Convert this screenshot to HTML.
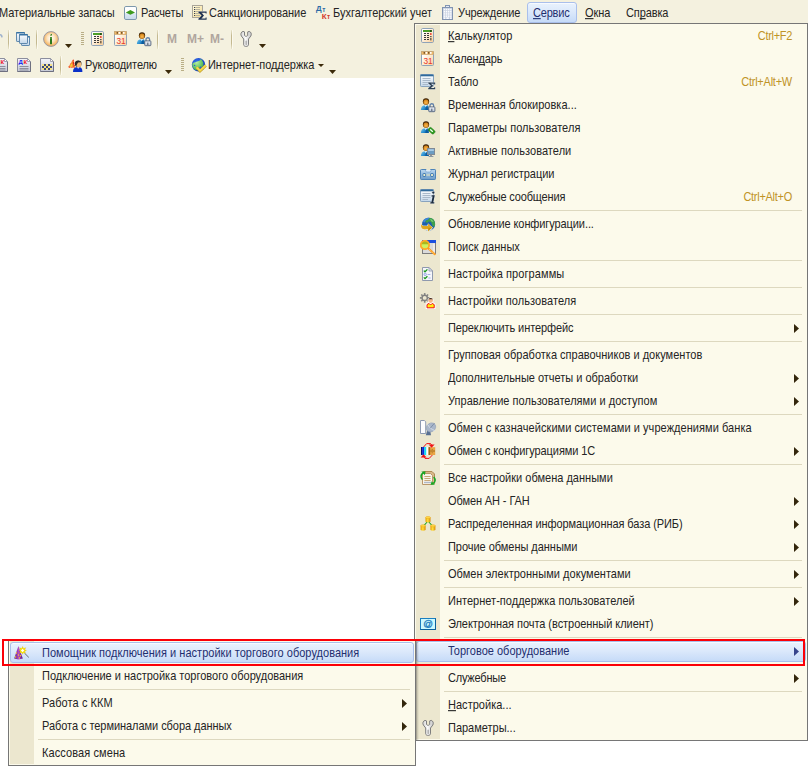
<!DOCTYPE html>
<html><head><meta charset="utf-8"><title>1C</title>
<style>
html,body{margin:0;padding:0}
body{width:808px;height:766px;overflow:hidden;background:#fff;position:relative;font-family:"Liberation Sans",sans-serif;font-size:11px;color:#000;}
.a{position:absolute}
.t{position:absolute;white-space:nowrap;line-height:13px;height:13px;transform:scaleY(1.1);transform-origin:0 10px;color:#242424}
.bar{position:absolute;left:0;top:0;width:808px;height:78px;background:#f4f1df}
.vs{position:absolute;width:1px;background:linear-gradient(#e9e4cc,#c4b990 30%,#c4b990 70%,#e9e4cc);box-shadow:1px 0 0 #fbf9ee}
.grip{position:absolute;width:3px;height:13px;background:repeating-linear-gradient(#b9ae86 0 1px,transparent 1px 2px)}
.dd{position:absolute;width:7px;height:4px;background:#3b2a0a;clip-path:polygon(0 0,100% 0,50% 100%)}
.menu{position:absolute;background:#fcfaeb;border:1px solid #767676;box-sizing:border-box}
.sub{}
.strip{position:absolute;left:1px;top:1px;bottom:1px;width:24px;background:#ece7cf}
.sep{position:absolute;height:1px;background:#ddd8bf}
.hl{position:absolute;box-sizing:border-box;border:1px solid #a9bfec;border-radius:3px;background:linear-gradient(#e9f2fd,#dce9fb 45%,#c6dbf8);box-shadow:inset 0 1px 0 #f7faff}
.sc{color:#c09326}
.ar{position:absolute;width:5px;height:9px;background:#33260c;clip-path:polygon(0 0,100% 50%,0 100%)}
u{text-decoration:underline;text-underline-offset:1px;text-decoration-skip-ink:none;text-decoration-thickness:1px}
svg{position:absolute;overflow:visible}
.dis{font-weight:bold;font-size:12px;color:#b0a69e}
</style></head><body>

<svg width="0" height="0" style="position:absolute"><defs>
<linearGradient id="gPeach" x1="0" y1="0" x2="1" y2="1"><stop offset="0.2" stop-color="#ffffff"/><stop offset="1" stop-color="#fbcf95"/></linearGradient>
<linearGradient id="gWin" x1="0" y1="0" x2="0" y2="1"><stop offset="0" stop-color="#ffffff"/><stop offset="1" stop-color="#c3d7ea"/></linearGradient>
<linearGradient id="gBody" x1="0" y1="0" x2="1" y2="0.6"><stop offset="0" stop-color="#7cc8ee"/><stop offset="0.55" stop-color="#2f93d2"/><stop offset="1" stop-color="#0a5fa5"/></linearGradient>
<radialGradient id="gHead" cx="0.5" cy="0.6" r="0.6"><stop offset="0" stop-color="#f8b850"/><stop offset="0.7" stop-color="#d88a20"/><stop offset="1" stop-color="#8a5208"/></radialGradient>
<radialGradient id="gInfo" cx="0.5" cy="0.45" r="0.55"><stop offset="0" stop-color="#ffffff"/><stop offset="0.45" stop-color="#fde6c4"/><stop offset="1" stop-color="#f2a94a"/></radialGradient>
<linearGradient id="gLock" x1="0" y1="0" x2="0" y2="1"><stop offset="0" stop-color="#f4f7fc"/><stop offset="1" stop-color="#b8c4d6"/></linearGradient>
<linearGradient id="gCas" x1="0" y1="0" x2="0" y2="1"><stop offset="0" stop-color="#bcd8f0"/><stop offset="1" stop-color="#6a9bc9"/></linearGradient>
<linearGradient id="gDoc" x1="0" y1="0" x2="0" y2="1"><stop offset="0" stop-color="#f4f5fa"/><stop offset="1" stop-color="#c4c8d6"/></linearGradient>
<linearGradient id="gWr" x1="0" y1="0" x2="1" y2="0"><stop offset="0" stop-color="#d4d4d4"/><stop offset="0.45" stop-color="#fafafa"/><stop offset="1" stop-color="#c4c4c4"/></linearGradient>
<radialGradient id="gGlobe" cx="0.4" cy="0.35" r="0.7"><stop offset="0" stop-color="#3b7bf0"/><stop offset="1" stop-color="#0a2fb8"/></radialGradient>
<radialGradient id="gLand" cx="0.4" cy="0.3" r="0.7"><stop offset="0" stop-color="#b8f0a0"/><stop offset="1" stop-color="#3fae4a"/></radialGradient>
<linearGradient id="gHat" x1="0" y1="0" x2="1" y2="0"><stop offset="0" stop-color="#5a1a86"/><stop offset="0.5" stop-color="#b24ac4"/><stop offset="1" stop-color="#5a1a86"/></linearGradient>
<linearGradient id="gCyl" x1="0" y1="0" x2="1" y2="0"><stop offset="0" stop-color="#e89a00"/><stop offset="0.45" stop-color="#ffe040"/><stop offset="1" stop-color="#d88800"/></linearGradient>
<linearGradient id="gSanc" x1="0" y1="0" x2="1" y2="1"><stop offset="0" stop-color="#fffbe0"/><stop offset="1" stop-color="#f6dc90"/></linearGradient>
<linearGradient id="gRas" x1="0" y1="0" x2="0" y2="1"><stop offset="0.45" stop-color="#ffffff"/><stop offset="0.55" stop-color="#dbe8f3"/><stop offset="1" stop-color="#c6d9ea"/></linearGradient>
</defs></svg>
<div class="bar"></div>
<div class="t " style="left:-1px;top:7px;letter-spacing:-0.054px;">Материальные запасы</div>
<svg class="i-raschety" style="left:123px;top:5px" width="16" height="16" viewBox="0 0 16 16"><rect x="1.5" y="1.5" width="12" height="13" rx="1.4" fill="url(#gRas)" stroke="#7d98ac"/><path d="M2.8 7.4L7.4 5L12 7.4L7.4 9.8Z" fill="#3d9a1e"/></svg>
<div class="t " style="left:141px;top:7px;letter-spacing:-0.087px;">Расчеты</div>
<svg class="i-sanction" style="left:192px;top:5px" width="16" height="16" viewBox="0 0 16 16"><rect x="0.5" y="0.5" width="10" height="12" fill="url(#gSanc)" stroke="#aaa69a"/><rect x="2" y="2" width="1.2" height="1" fill="#3a4250"/><rect x="3.4" y="2" width="4.6" height="1" fill="#b8b4a0"/><rect x="2" y="4" width="1.2" height="1" fill="#3a4250"/><rect x="3.4" y="4" width="4.6" height="1" fill="#b8b4a0"/><rect x="2" y="6" width="1.2" height="1" fill="#3a4250"/><rect x="3.4" y="6" width="4.6" height="1" fill="#b8b4a0"/><rect x="2" y="8" width="1.2" height="1" fill="#3a4250"/><rect x="3.4" y="8" width="4.6" height="1" fill="#b8b4a0"/><rect x="2" y="10" width="1.2" height="1" fill="#3a4250"/><rect x="3.4" y="10" width="4.6" height="1" fill="#b8b4a0"/><path d="M6.4 6.4H14.6V8.6H13.6V7.8H9.4L12 10.6L9.4 13.4H13.6V12.6H14.6V14.8H6.4V13.8L9.6 10.6L6.4 7.4Z" fill="#1f3150" stroke="#f8f5e6" stroke-width=".8" paint-order="stroke"/></svg>
<div class="t " style="left:209px;top:7px;letter-spacing:-0.067px;">Санкционирование</div>
<svg class="i-dtkt" style="left:316px;top:5px" width="16" height="16" viewBox="0 0 16 16"><text x="0" y="6.3" font-family="Liberation Sans,sans-serif" font-weight="bold" font-size="7.8" fill="#2c6aa6">Д</text><text x="6.3" y="7" font-family="Liberation Sans,sans-serif" font-weight="bold" font-size="6.4" fill="#2c6aa6">т</text><text x="5.8" y="13.8" font-family="Liberation Sans,sans-serif" font-weight="bold" font-size="8" fill="#d23a2a">К</text><text x="10.9" y="14" font-family="Liberation Sans,sans-serif" font-weight="bold" font-size="6.4" fill="#d23a2a">т</text></svg>
<div class="t " style="left:333px;top:7px;letter-spacing:-0.007px;">Бухгалтерский учет</div>
<svg class="i-building" style="left:441px;top:5px" width="16" height="16" viewBox="0 0 16 16"><rect x="4.5" y="0.5" width="4" height="2.4" fill="#e6ebf4" stroke="#8194b2"/><rect x="1.5" y="2.5" width="10" height="12" fill="#c9d2e2" stroke="#8194b2"/><rect x="2.8" y="3.8" width="1.4" height="1.5" fill="#fbfcff"/><rect x="2.8" y="6" width="1.4" height="1.5" fill="#fbfcff"/><rect x="2.8" y="8.2" width="1.4" height="1.5" fill="#fbfcff"/><rect x="2.8" y="10.4" width="1.4" height="1.5" fill="#fbfcff"/><rect x="4.9" y="3.8" width="1.4" height="1.5" fill="#fbfcff"/><rect x="4.9" y="6" width="1.4" height="1.5" fill="#fbfcff"/><rect x="4.9" y="8.2" width="1.4" height="1.5" fill="#fbfcff"/><rect x="4.9" y="10.4" width="1.4" height="1.5" fill="#fbfcff"/><rect x="7" y="3.8" width="1.4" height="1.5" fill="#fbfcff"/><rect x="7" y="6" width="1.4" height="1.5" fill="#fbfcff"/><rect x="7" y="8.2" width="1.4" height="1.5" fill="#fbfcff"/><rect x="7" y="10.4" width="1.4" height="1.5" fill="#fbfcff"/><rect x="9.1" y="3.8" width="1.4" height="1.5" fill="#fbfcff"/><rect x="9.1" y="6" width="1.4" height="1.5" fill="#fbfcff"/><rect x="9.1" y="8.2" width="1.4" height="1.5" fill="#fbfcff"/><rect x="9.1" y="10.4" width="1.4" height="1.5" fill="#fbfcff"/><rect x="2.8" y="12.4" width="1.4" height="1.6" fill="#fbfcff"/><rect x="5.4" y="12.4" width="2.4" height="1.6" fill="#fbfcff"/><rect x="9.1" y="12.4" width="1.4" height="1.6" fill="#fbfcff"/></svg>
<div class="t " style="left:458px;top:7px;letter-spacing:-0.076px;">Учреждение</div>
<div class="hl" style="left:527px;top:2px;width:50px;height:21px"></div>
<div class="t " style="left:533px;top:7px;letter-spacing:-0.195px;color:#1f2f6f"><u>С</u>ервис</div>
<div class="t " style="left:585px;top:7px;letter-spacing:-0.066px;"><u>О</u>кна</div>
<div class="t " style="left:626px;top:7px;letter-spacing:-0.122px;">Сп<u>р</u>авка</div>
<svg class="i-undo" style="left:-14px;top:31px" width="16" height="16" viewBox="0 0 16 16"><path d="M12 7C12.6 3 15.6 2.6 16 6.4" fill="none" stroke="#9fb2cc" stroke-width="1.6"/></svg>
<div class="vs" style="left:8px;top:30px;height:19px"></div>
<svg class="i-windows" style="left:15px;top:31px" width="16" height="16" viewBox="0 0 16 16"><rect x="1.5" y="1.5" width="8" height="9" rx=".6" fill="url(#gWin)" stroke="#5f88ac"/><rect x="1.2" y="1.1" width="8.6" height="1.5" rx=".4" fill="#3873a3"/><rect x="6.5" y="5.5" width="8" height="9" rx=".6" fill="url(#gWin)" stroke="#5f88ac"/><rect x="6.2" y="5.1" width="8.6" height="1.5" rx=".4" fill="#3873a3"/><rect x="4.5" y="3.5" width="8" height="9" rx=".6" fill="url(#gWin)" stroke="#5f88ac"/><rect x="4.2" y="3.1" width="8.6" height="1.5" rx=".4" fill="#3873a3"/></svg>
<div class="vs" style="left:36px;top:30px;height:19px"></div>
<svg class="i-info" style="left:43px;top:31px" width="16" height="16" viewBox="0 0 16 16"><circle cx="8" cy="8" r="7.4" fill="url(#gInfo)" stroke="#9a9aa6" stroke-width="1"/><path d="M7 4L9 2.8V4.6H7Z" fill="#2d7f1c"/><rect x="7" y="6" width="2" height="7.2" fill="#2a7a1a"/><rect x="7" y="6" width="2" height="2" fill="#6aaa50" opacity=".5"/></svg>
<div class="dd" style="left:65px;top:44px"></div>
<div class="grip" style="left:81px;top:32px"></div>
<svg class="i-calc" style="left:90px;top:31px" width="16" height="16" viewBox="0 0 16 16"><rect x="1.5" y="0.5" width="12" height="14" rx="1.2" fill="url(#gPeach)" stroke="#8ea2b8"/><rect x="3" y="2" width="9" height="2" fill="#4a9e28"/><rect x="10" y="2" width="1.6" height="2" fill="#27521a"/><rect x="4" y="5" width="2" height="1" fill="#3a3a3a"/><rect x="7" y="5" width="2" height="1" fill="#3a3a3a"/><rect x="4" y="7" width="2" height="1" fill="#3a3a3a"/><rect x="7" y="7" width="2" height="1" fill="#3a3a3a"/><rect x="4" y="9" width="2" height="1" fill="#3a3a3a"/><rect x="7" y="9" width="2" height="1" fill="#3a3a3a"/><rect x="4" y="11" width="2" height="1" fill="#3a3a3a"/><rect x="7" y="11" width="2" height="1" fill="#3a3a3a"/><rect x="10.2" y="5" width="1.3" height="2" fill="#e83020"/><rect x="10.2" y="8" width="1.3" height="1.2" fill="#3a3a3a"/><rect x="10.2" y="10" width="1.3" height="2.4" fill="#5a4a3a"/></svg>
<svg class="i-calendar" style="left:113px;top:31px" width="16" height="16" viewBox="0 0 16 16"><rect x="1.5" y="0.5" width="12" height="14" rx="1" fill="url(#gPeach)" stroke="#8ea2b8"/><rect x="1.5" y="0.5" width="12" height="3" fill="#f0b866" stroke="#c9a26a" stroke-width=".6"/><rect x="3.6" y="1.2" width="1.4" height="1.4" fill="#5a3a1a"/><rect x="5.6" y="1" width="1.6" height="1.8" fill="#fff"/><rect x="8" y="1.2" width="1.4" height="1.4" fill="#5a3a1a"/><rect x="10" y="1" width="1.6" height="1.8" fill="#fff"/><text x="3.4" y="13.1" font-family="Liberation Sans,sans-serif" font-size="9.6" fill="#e8392b" textLength="9.2" lengthAdjust="spacingAndGlyphs">31</text></svg>
<svg class="i-userlock" style="left:136px;top:31px" width="16" height="16" viewBox="0 0 16 16"><path d="M0.9 13 C0.9 9.8 2.4 8.7 4.6 8.3 L7.4 8.3 C8.6 8.7 8.9 9.6 8.9 13 Z" fill="url(#gBody)"/><path d="M4.3 8.2 L5.8 9.9 L7.3 8.2 Z" fill="#f4fbff"/><path d="M5.8 9.9 L6.8 9.2 L7.7 10.4 L7.7 13 L5.4 13 Z" fill="#0a5a9c" opacity=".9"/><circle cx="6" cy="4.5" r="3.15" fill="#3a2006"/><ellipse cx="6" cy="5" rx="2.7" ry="2.8" fill="url(#gHead)"/><path d="M10 10V8.4C10 6.2 13.6 6.2 13.6 8.4V10" fill="#f6f0d8" stroke="#5f7fa8" stroke-width="1.3"/><rect x="8.7" y="9.9" width="6.2" height="4.8" rx=".8" fill="url(#gLock)" stroke="#52627a" stroke-width=".9"/><rect x="11.4" y="11.6" width=".9" height="2.4" fill="#3a4658"/></svg>
<div class="vs" style="left:157px;top:30px;height:19px"></div>
<div class="t dis" style="left:167px;top:33px;">M</div>
<div class="t dis" style="left:187px;top:33px;">M+</div>
<div class="t dis" style="left:210px;top:33px;">M-</div>
<div class="vs" style="left:231px;top:30px;height:19px"></div>
<svg class="i-wrench" style="left:238px;top:31px" width="16" height="16" viewBox="0 0 16 16"><path d="M5 0.4C3 0.9 2.3 3.3 3.4 5.1L5.7 8V13.8C5.7 15.9 10.5 15.9 10.5 13.8V8L12.8 5.1C13.9 3.3 13.2 0.9 11.2 0.4L9.7 0.9V4C9.7 5 8.9 5.3 8.1 5.3C7.3 5.3 6.5 5 6.5 4V0.9Z" fill="url(#gWr)" stroke="#7e7e7e" stroke-width="1" stroke-linejoin="round"/><rect x="7.6" y="9.4" width="1" height="4.6" rx=".5" fill="#8a8a8a"/></svg>
<div class="dd" style="left:259px;top:44px"></div>
<svg class="i-docdk" style="left:-7px;top:57px" width="16" height="16" viewBox="0 0 16 16"><path d="M1.5 1.5H11.5L14.5 4.5V14.5H1.5Z" fill="url(#gDoc)" stroke="#8c8e9e"/><path d="M1.5 14.5H14.5V5" fill="none" stroke="#6e7080"/><path d="M11.5 1.5V4.5H14.5Z" fill="#fff" stroke="#8c8e9e" stroke-width=".8"/><text x="2.6" y="7.2" font-family="Liberation Sans,sans-serif" font-weight="bold" font-size="6" fill="#0a1ef0">Д</text><text x="7.4" y="7.2" font-family="Liberation Sans,sans-serif" font-weight="bold" font-size="6" fill="#f01020">К</text><path d="M3.5 9.5H12.5M3.5 11.5H12.5M3.5 13H12.5" stroke="#8e909c" stroke-width="1"/></svg>
<svg class="i-docdk" style="left:16px;top:57px" width="16" height="16" viewBox="0 0 16 16"><path d="M1.5 1.5H11.5L14.5 4.5V14.5H1.5Z" fill="url(#gDoc)" stroke="#8c8e9e"/><path d="M1.5 14.5H14.5V5" fill="none" stroke="#6e7080"/><path d="M11.5 1.5V4.5H14.5Z" fill="#fff" stroke="#8c8e9e" stroke-width=".8"/><text x="2.6" y="7.2" font-family="Liberation Sans,sans-serif" font-weight="bold" font-size="6" fill="#0a1ef0">Д</text><text x="7.4" y="7.2" font-family="Liberation Sans,sans-serif" font-weight="bold" font-size="6" fill="#f01020">К</text><path d="M3.5 9.5H12.5M3.5 11.5H12.5M3.5 13H12.5" stroke="#8e909c" stroke-width="1"/></svg>
<svg class="i-doccheck" style="left:39px;top:57px" width="16" height="16" viewBox="0 0 16 16"><path d="M1.5 1.5H11.5L14.5 4.5V14.5H1.5Z" fill="url(#gDoc)" stroke="#8c8e9e"/><path d="M1.5 14.5H14.5V5" fill="none" stroke="#6e7080"/><path d="M11.5 1.5V4.5H14.5Z" fill="#fff" stroke="#8c8e9e" stroke-width=".8"/><rect x="3" y="7" width="10" height="6" fill="#f6e284"/><rect x="5" y="7" width="2" height="2" fill="#3b4a7c"/><rect x="9" y="7" width="2" height="2" fill="#3b4a7c"/><rect x="3" y="9" width="2" height="2" fill="#3b4a7c"/><rect x="7" y="9" width="2" height="2" fill="#3b4a7c"/><rect x="11" y="9" width="2" height="2" fill="#3b4a7c"/><rect x="5" y="11" width="2" height="2" fill="#3b4a7c"/><rect x="9" y="11" width="2" height="2" fill="#3b4a7c"/></svg>
<div class="vs" style="left:60px;top:56px;height:19px"></div>
<svg class="i-warnuser" style="left:67px;top:57px" width="16" height="16" viewBox="0 0 16 16"><path d="M6.3 2.8L1.6 10.3H7.8Z" fill="#f8c838" stroke="#f03a20" stroke-width="1" stroke-linejoin="round" stroke-dasharray="1.2 .6"/><rect x="5.6" y="4.8" width="1.3" height="3" fill="#e01818"/><rect x="5.6" y="8.4" width="1.3" height="1.2" fill="#e01818"/><path d="M6 15C6 12 7 10.7 9 10.2H13C14.6 10.7 15.4 12 15.4 15Z" fill="#0a30c8"/><path d="M10 10.2L11.2 11.8L12.4 10.2Z" fill="#f2f6ff"/><circle cx="11.2" cy="6.8" r="3.3" fill="#20201e"/><ellipse cx="11.8" cy="7.4" rx="2.5" ry="2.8" fill="#f0b878"/><path d="M8.2 6A3.2 3.2 0 0 1 14 5.2L11 5.6L9.4 8.4Z" fill="#2a2a2a"/></svg>
<div class="t " style="left:85px;top:59px;letter-spacing:-0.116px;">Руководителю</div>
<div class="dd" style="left:165px;top:70px"></div>
<div class="grip" style="left:181px;top:58px"></div>
<svg class="i-globe" style="left:191px;top:57px" width="16" height="16" viewBox="0 0 16 16"><circle cx="7.5" cy="7.8" r="6.7" fill="url(#gGlobe)"/><path d="M1.2 7C2 5.6 4 5.4 5.4 4.8L8.4 3.8L10 1.9L11 3.2L12.2 5.4L12.4 8.4L10.4 10.6L7.4 10.8L6 13.4L3.4 12.6L1.6 10Z" fill="url(#gLand)"/><circle cx="3.6" cy="8.4" r=".7" fill="#2a5fd8"/><circle cx="9.6" cy="10.4" r=".8" fill="#2a5fd8"/><path d="M5.6 10.4L9 14L14.8 8.6" fill="none" stroke="#c39a1c" stroke-width="2.8" stroke-linejoin="miter"/><path d="M5.6 10.2L9 13.7L14.8 8.3" fill="none" stroke="#f4d84c" stroke-width="2" stroke-linejoin="miter"/></svg>
<div class="t " style="left:208px;top:59px;letter-spacing:-0.045px;">Интернет-поддержка</div>
<div class="a" style="left:318px;top:64px;width:0;height:0;border-left:3px solid transparent;border-right:3px solid transparent;border-top:3px solid #3b2a0a"></div>
<div class="dd" style="left:329px;top:70px"></div>
<div class="menu" style="left:414px;top:23px;width:394px;height:718px"><div class="strip"></div></div>
<svg class="i-calc" style="left:420px;top:28px" width="16" height="16" viewBox="0 0 16 16"><rect x="1.5" y="0.5" width="12" height="14" rx="1.2" fill="url(#gPeach)" stroke="#8ea2b8"/><rect x="3" y="2" width="9" height="2" fill="#4a9e28"/><rect x="10" y="2" width="1.6" height="2" fill="#27521a"/><rect x="4" y="5" width="2" height="1" fill="#3a3a3a"/><rect x="7" y="5" width="2" height="1" fill="#3a3a3a"/><rect x="4" y="7" width="2" height="1" fill="#3a3a3a"/><rect x="7" y="7" width="2" height="1" fill="#3a3a3a"/><rect x="4" y="9" width="2" height="1" fill="#3a3a3a"/><rect x="7" y="9" width="2" height="1" fill="#3a3a3a"/><rect x="4" y="11" width="2" height="1" fill="#3a3a3a"/><rect x="7" y="11" width="2" height="1" fill="#3a3a3a"/><rect x="10.2" y="5" width="1.3" height="2" fill="#e83020"/><rect x="10.2" y="8" width="1.3" height="1.2" fill="#3a3a3a"/><rect x="10.2" y="10" width="1.3" height="2.4" fill="#5a4a3a"/></svg>
<div class="t " style="left:448px;top:30px;letter-spacing:-0.010px;"><u>К</u>алькулятор</div>
<div class="t sc" style="left:0px;top:30px;letter-spacing:-0.311px;left:auto;right:16px">Ctrl+F2</div>
<svg class="i-calendar" style="left:420px;top:51px" width="16" height="16" viewBox="0 0 16 16"><rect x="1.5" y="0.5" width="12" height="14" rx="1" fill="url(#gPeach)" stroke="#8ea2b8"/><rect x="1.5" y="0.5" width="12" height="3" fill="#f0b866" stroke="#c9a26a" stroke-width=".6"/><rect x="3.6" y="1.2" width="1.4" height="1.4" fill="#5a3a1a"/><rect x="5.6" y="1" width="1.6" height="1.8" fill="#fff"/><rect x="8" y="1.2" width="1.4" height="1.4" fill="#5a3a1a"/><rect x="10" y="1" width="1.6" height="1.8" fill="#fff"/><text x="3.4" y="13.1" font-family="Liberation Sans,sans-serif" font-size="9.6" fill="#e8392b" textLength="9.2" lengthAdjust="spacingAndGlyphs">31</text></svg>
<div class="t " style="left:448px;top:53px;letter-spacing:-0.137px;">Кален<u>д</u>арь</div>
<svg class="i-tablo" style="left:420px;top:74px" width="16" height="16" viewBox="0 0 16 16"><rect x="0.5" y="0.5" width="13" height="12" rx=".8" fill="url(#gWin)" stroke="#88a3be"/><rect x="0.5" y="0.5" width="13" height="1.8" fill="#2f6a9b"/><path d="M2.5 4.5H10.5M2.5 6.5H10.5M2.5 8.5H10.5M2.5 10.5H8" stroke="#a9b9ca" stroke-width="1"/><path d="M8 8h8v7h-8z" fill="#eef3f9" opacity=".0"/><path d="M8.2 8.4H15.2V10.4H14.2V9.7H10.9L13.3 11.8L10.9 13.9H14.2V13.2H15.2V15.2H8.2V14.3L11 11.8L8.2 9.3Z" fill="#2c4054" stroke="#f2f5f9" stroke-width=".5" paint-order="stroke"/></svg>
<div class="t " style="left:448px;top:76px;letter-spacing:-0.102px;">Табло</div>
<div class="t sc" style="left:0px;top:76px;letter-spacing:-0.239px;left:auto;right:16px">Ctrl+Alt+W</div>
<svg class="i-userlock" style="left:420px;top:97px" width="16" height="16" viewBox="0 0 16 16"><path d="M0.9 13 C0.9 9.8 2.4 8.7 4.6 8.3 L7.4 8.3 C8.6 8.7 8.9 9.6 8.9 13 Z" fill="url(#gBody)"/><path d="M4.3 8.2 L5.8 9.9 L7.3 8.2 Z" fill="#f4fbff"/><path d="M5.8 9.9 L6.8 9.2 L7.7 10.4 L7.7 13 L5.4 13 Z" fill="#0a5a9c" opacity=".9"/><circle cx="6" cy="4.5" r="3.15" fill="#3a2006"/><ellipse cx="6" cy="5" rx="2.7" ry="2.8" fill="url(#gHead)"/><path d="M10 10V8.4C10 6.2 13.6 6.2 13.6 8.4V10" fill="#f6f0d8" stroke="#5f7fa8" stroke-width="1.3"/><rect x="8.7" y="9.9" width="6.2" height="4.8" rx=".8" fill="url(#gLock)" stroke="#52627a" stroke-width=".9"/><rect x="11.4" y="11.6" width=".9" height="2.4" fill="#3a4658"/></svg>
<div class="t " style="left:448px;top:99px;letter-spacing:0.018px;">Временная блокировка...</div>
<svg class="i-userparam" style="left:420px;top:120px" width="16" height="16" viewBox="0 0 16 16"><path d="M0.9 13 C0.9 9.8 2.4 8.7 4.6 8.3 L7.4 8.3 C8.6 8.7 8.9 9.6 8.9 13 Z" fill="url(#gBody)"/><path d="M4.3 8.2 L5.8 9.9 L7.3 8.2 Z" fill="#f4fbff"/><path d="M5.8 9.9 L6.8 9.2 L7.7 10.4 L7.7 13 L5.4 13 Z" fill="#0a5a9c" opacity=".9"/><circle cx="6" cy="4.5" r="3.15" fill="#3a2006"/><ellipse cx="6" cy="5" rx="2.7" ry="2.8" fill="url(#gHead)"/><g transform="rotate(42 11.5 10.6)"><rect x="8.2" y="8.7" width="7" height="3.8" rx="1.2" fill="#2f9e22" stroke="#1c7414" stroke-width=".6"/><rect x="9.6" y="9.9" width="3.8" height="1.3" rx=".6" fill="#f0fff0"/></g></svg>
<div class="t " style="left:448px;top:122px;letter-spacing:0.047px;">Параметры пользователя</div>
<svg class="i-useractive" style="left:420px;top:143px" width="16" height="16" viewBox="0 0 16 16"><path d="M0.9 13 C0.9 9.8 2.4 8.7 4.6 8.3 L7.4 8.3 C8.6 8.7 8.9 9.6 8.9 13 Z" fill="url(#gBody)"/><path d="M4.3 8.2 L5.8 9.9 L7.3 8.2 Z" fill="#f4fbff"/><path d="M5.8 9.9 L6.8 9.2 L7.7 10.4 L7.7 13 L5.4 13 Z" fill="#0a5a9c" opacity=".9"/><circle cx="6" cy="4.5" r="3.15" fill="#3a2006"/><ellipse cx="6" cy="5" rx="2.7" ry="2.8" fill="url(#gHead)"/><rect x="7.5" y="5.5" width="7" height="6" fill="#6c9cc2" stroke="#7f8a96" stroke-width="1"/><rect x="8.2" y="6.2" width="5.6" height="1.8" fill="#a8cbe6"/><rect x="10.2" y="12" width="1.6" height="1.2" fill="#77828e"/><rect x="8.6" y="13" width="4.8" height="1" fill="#8b96a2"/></svg>
<div class="t " style="left:448px;top:145px;letter-spacing:0.047px;">Активные пользователи</div>
<svg class="i-journal" style="left:420px;top:166px" width="16" height="16" viewBox="0 0 16 16"><g transform="translate(0 2)"><path d="M1.5 1.5H6L7 2.8H9.6L10.6 1.5H14.9Q15.5 1.5 15.5 2.2V10.6Q15.5 11.5 14.8 11.5H1.2Q0.5 11.5 0.5 10.6V2.2Q0.5 1.5 1.5 1.5Z" fill="url(#gCas)" stroke="#4d83b8"/><path d="M5.2 2L6.4 4H10.2L11.4 2" fill="#dcebf8" stroke="#6a9acb" stroke-width=".6"/><circle cx="4.3" cy="7" r="1.9" fill="#3f77ad"/><circle cx="12" cy="7" r="1.9" fill="#3f77ad"/><rect x="3.4" y="6.1" width="1.8" height="1.8" fill="#fffbd0"/><rect x="11.1" y="6.1" width="1.8" height="1.8" fill="#fffbd0"/><rect x="6.4" y="6.2" width="3.6" height="1.6" fill="#c8d4c8"/></g></svg>
<div class="t " style="left:448px;top:168px;letter-spacing:-0.031px;">Журнал регистрации</div>
<svg class="i-messages" style="left:420px;top:189px" width="16" height="16" viewBox="0 0 16 16"><rect x="0.5" y="0.5" width="13" height="12" rx=".8" fill="url(#gWin)" stroke="#88a3be"/><rect x="0.5" y="0.5" width="13" height="1.8" fill="#2f6a9b"/><path d="M2.5 4.5H10.5M2.5 6.5H10.5M2.5 8.5H10.5M2.5 10.5H8" stroke="#a9b9ca" stroke-width="1"/><circle cx="13.3" cy="3.6" r="1.4" fill="#1c2c40" stroke="#eef3f9" stroke-width=".5"/><path d="M11.6 6.2H14.8L13.2 13.2H14.4L14.2 14.4H10.2L10.4 13.2H11.4L12.6 7.4H11.4Z" fill="#1c2c40" stroke="#eef3f9" stroke-width=".5" paint-order="stroke"/></svg>
<div class="t " style="left:448px;top:191px;letter-spacing:-0.152px;">Служебные сообщения</div>
<div class="t sc" style="left:0px;top:191px;letter-spacing:-0.276px;left:auto;right:16px">Ctrl+Alt+O</div>
<div class="sep" style="left:444px;top:210px;width:358px"></div>
<svg class="i-update" style="left:420px;top:216px" width="16" height="16" viewBox="0 0 16 16"><circle cx="8.6" cy="8.2" r="6.5" fill="#1d5fae"/><path d="M4 3.6C5.4 2.2 7.4 1.7 9.4 1.8L8.4 3.6L6 4.6L5 6.4L3 6Z" fill="#3d86d8"/><path d="M9.4 1.8C11.4 1.8 13.2 2.8 14.2 4.6C15.2 6.4 15.4 8.6 14.6 10.6L12.8 10.4L11 6L8.6 5.6L7.4 7L5.2 5.8L6 4.6L8.4 3.6Z" fill="#3f9f4c"/><path d="M10 3C11.6 3.2 13 4.4 13.6 6L11.6 5.4Z" fill="#7ccf7a"/><path d="M3.6 12.2C5.2 14.4 8.6 15.2 11.4 14L12.6 11.4L7.6 9.4Z" fill="#eef8ff"/><path d="M1.2 7.6C1.4 9.4 2.4 10 4 10H8V7.8L12.6 11.6L8 15.4V13.2H4C1.6 13.2 0.6 11 1.2 7.6Z" fill="#e0a820" stroke="#fdf6e0" stroke-width=".7" paint-order="stroke"/><path d="M3 12H8.4V14.4L11.8 11.7Z" fill="#c08a10"/></svg>
<div class="t " style="left:448px;top:218px;letter-spacing:-0.095px;">Обновление конфигурации...</div>
<svg class="i-search" style="left:420px;top:239px" width="16" height="16" viewBox="0 0 16 16"><rect x="2.5" y="1.5" width="13" height="13" fill="#dadada" stroke="#7c7c7c"/><rect x="2" y="1" width="14" height="3" fill="#1a4fe0"/><rect x="13" y="4.5" width="2" height="9.5" fill="#ececec"/><circle cx="4.9" cy="6" r="4.2" fill="#cdf25e" stroke="#ffa928" stroke-width="1.4"/><path d="M1 4.4A4.2 4.2 0 0 1 8.8 4.4V5.2H1Z" fill="#a9b81c"/><circle cx="4.9" cy="6" r="4.2" fill="none" stroke="#ffa928" stroke-width="1.4"/><path d="M8.4 9.6L14.8 15.2" stroke="#ff9b18" stroke-width="2" stroke-linecap="round"/><path d="M9 10.2L14.6 15" stroke="#fff0b0" stroke-width=".8" stroke-dasharray="1 1"/></svg>
<div class="t " style="left:448px;top:241px;letter-spacing:0.022px;">Поиск данных</div>
<div class="sep" style="left:444px;top:260px;width:358px"></div>
<svg class="i-settings" style="left:420px;top:266px" width="16" height="16" viewBox="0 0 16 16"><g transform="translate(0 1)"><path d="M2.5 0.5H9L12.5 4V13.5H2.5Z" fill="#f5f6fa" stroke="#8f99ae"/><path d="M9 0.5V4H12.5Z" fill="#e6e9f1" stroke="#8f99ae" stroke-width=".8"/><path d="M3.8 3.6L5 4.8L7.4 2.4" fill="none" stroke="#18961c" stroke-width="1.3"/><path d="M3.8 10.4L5 11.6L7.4 9.2" fill="none" stroke="#18961c" stroke-width="1.3"/><circle cx="5.2" cy="7.4" r="1.2" fill="#dfe6ff" stroke="#8b9be0" stroke-width=".8"/><path d="M7.6 7.5H10.4M8.4 11H10.6" stroke="#9fb0e8" stroke-width="1"/></g></svg>
<div class="t " style="left:448px;top:268px;letter-spacing:0.085px;">Настройка программы</div>
<div class="sep" style="left:444px;top:287px;width:358px"></div>
<svg class="i-usersettings" style="left:420px;top:293px" width="16" height="16" viewBox="0 0 16 16"><g transform="translate(4.7 4.9)"><circle r="2.7" fill="none" stroke="#808080" stroke-width="1.5"/><rect x="-0.8" y="-4.8" width="1.6" height="1.8" fill="#808080" transform="rotate(0)"/><rect x="-0.8" y="-4.8" width="1.6" height="1.8" fill="#808080" transform="rotate(45)"/><rect x="-0.8" y="-4.8" width="1.6" height="1.8" fill="#808080" transform="rotate(90)"/><rect x="-0.8" y="-4.8" width="1.6" height="1.8" fill="#808080" transform="rotate(135)"/><rect x="-0.8" y="-4.8" width="1.6" height="1.8" fill="#808080" transform="rotate(180)"/><rect x="-0.8" y="-4.8" width="1.6" height="1.8" fill="#808080" transform="rotate(225)"/><rect x="-0.8" y="-4.8" width="1.6" height="1.8" fill="#808080" transform="rotate(270)"/><rect x="-0.8" y="-4.8" width="1.6" height="1.8" fill="#808080" transform="rotate(315)"/></g><path d="M6.4 15.4V11.2L8.6 9.8H12.4L14.8 11.2V15.4Z" fill="#fff" stroke="#fff" stroke-width="1.4"/><circle cx="10.6" cy="7.4" r="2.9" fill="#fff"/><path d="M7 14.8V11.6L9 10.4L10.6 12L12.2 10.4L14.2 11.6V14.8Z" fill="#ffee10" stroke="#f01010" stroke-width="1"/><circle cx="10.6" cy="7.6" r="2.3" fill="#f6b88c"/><path d="M8.2 7.4A2.4 2.4 0 0 1 13 7.4L12.4 6.2H8.8Z" fill="#3a2418"/></svg>
<div class="t " style="left:448px;top:295px;letter-spacing:0.075px;">Настройки пользователя</div>
<div class="sep" style="left:444px;top:314px;width:358px"></div>
<div class="t " style="left:448px;top:322px;letter-spacing:-0.101px;">Переключить интерфейс</div>
<div class="ar" style="left:794px;top:324px;"></div>
<div class="sep" style="left:444px;top:341px;width:358px"></div>
<div class="t " style="left:448px;top:349px;letter-spacing:0.014px;">Групповая обработка справочников и документов</div>
<div class="t " style="left:448px;top:372px;letter-spacing:-0.011px;">Дополнительные отчеты и обработки</div>
<div class="ar" style="left:794px;top:374px;"></div>
<div class="t " style="left:448px;top:395px;letter-spacing:0.031px;">Управление пользователями и доступом</div>
<div class="ar" style="left:794px;top:397px;"></div>
<div class="sep" style="left:444px;top:414px;width:358px"></div>
<svg class="i-treasury" style="left:420px;top:420px" width="16" height="16" viewBox="0 0 16 16"><path d="M0.5 0.5H4.4L5.7 1.8V13.5H0.5Z" fill="#fdfdff" stroke="#8d9ab2"/><path d="M8 8.4L9.8 8.4L11 15.2H5.8Z" fill="#586f92"/><ellipse cx="11" cy="7.4" rx="5" ry="4.2" transform="rotate(-38 11 7.4)" fill="#aab7ca" stroke="#8e9db4" stroke-width=".6"/><path d="M7.4 4.2C9 7 11.6 9.8 14.8 10.6" fill="none" stroke="#d7dfea" stroke-width="1"/><path d="M10.4 8L14.6 3" stroke="#7f90aa" stroke-width="1"/></svg>
<div class="t " style="left:448px;top:422px;letter-spacing:0.059px;">Обмен с казначейскими системами и учреждениями банка</div>
<svg class="i-exch1c" style="left:420px;top:443px" width="16" height="16" viewBox="0 0 16 16"><rect x="1" y="4" width="1.6" height="8" fill="#0c0c6c"/><rect x="2.4" y="4" width="2" height="8" fill="#0428e4"/><rect x="4.4" y="4" width="2" height="8" fill="#08e6f6"/><rect x="6.4" y="4" width="1.8" height="8" fill="#fdfdfd"/><rect x="8.6" y="4.2" width="6.6" height="7.8" fill="#eaa444"/><rect x="8.6" y="4.2" width="1.6" height="7.8" fill="#9a6418"/><path d="M10.4 8H15M12.2 6.2V7M12.2 9.4V10.2" stroke="#8a5a14" stroke-width=".8"/><path d="M3.6 4L6.6 0.6H10.6L11.6 2" fill="none" stroke="#f01418" stroke-width="1"/><path d="M8.6 1.4H14.6L11.6 4.8Z" fill="#f01418"/><path d="M12.4 12L9.2 15.4H5L4 14" fill="none" stroke="#f01418" stroke-width="1"/><path d="M0.6 14.6H6.6L3.6 11.2Z" fill="#f01418"/></svg>
<div class="t " style="left:448px;top:445px;letter-spacing:-0.078px;">Обмен с конфигурациями 1С</div>
<div class="ar" style="left:794px;top:447px;"></div>
<div class="sep" style="left:444px;top:464px;width:358px"></div>
<svg class="i-allexch" style="left:420px;top:470px" width="16" height="16" viewBox="0 0 16 16"><path d="M3.5 1.5H12L14.5 4V13.5H3.5Z" fill="#d9b98a" stroke="#b08a54"/><path d="M2.5 3.5H10.5L12.5 5.5V14.5H2.5Z" fill="#f8f4ea" stroke="#b9976a"/><path d="M4.4 6.5H10.6M4.4 8.5H10.6M4.4 10.5H10.6" stroke="#c8a878" stroke-width="1"/><path d="M4 12.5H11" stroke="#b0b8c8" stroke-width="1.4"/><path d="M2.4 9.6C0.6 7.2 1 4.4 3 2.8" fill="none" stroke="#14a824" stroke-width="1.5"/><path d="M1.4 1.6H5.6L4.8 5.2Z" fill="#14a824"/><path d="M13.8 7C15.6 9.4 15 12 13.4 13.4" fill="none" stroke="#14a824" stroke-width="1.5"/><path d="M14.8 14.8H10.6L11.6 11.2Z" fill="#14a824"/></svg>
<div class="t " style="left:448px;top:472px;letter-spacing:0.009px;">Все настройки обмена данными</div>
<div class="t " style="left:448px;top:495px;letter-spacing:-0.099px;">Обмен АН - ГАН</div>
<div class="ar" style="left:794px;top:497px;"></div>
<svg class="i-rib" style="left:420px;top:516px" width="16" height="16" viewBox="0 0 16 16"><path d="M8 5L3.2 10.4M8 5L12.8 10.4" stroke="#28a828" stroke-width="1.1"/><path d="M5.5 1.6V5.8Q8.0 7.3999999999999995 10.5 5.8V1.6Z" fill="url(#gCyl)"/><ellipse cx="8.0" cy="1.6" rx="2.5" ry="1.1" fill="#ffd84a" stroke="#e8a410" stroke-width=".5"/><path d="M0.6 9.8V14.0Q3.1 15.600000000000001 5.6 14.0V9.8Z" fill="url(#gCyl)"/><ellipse cx="3.1" cy="9.8" rx="2.5" ry="1.1" fill="#ffd84a" stroke="#e8a410" stroke-width=".5"/><path d="M10.4 9.8V14.0Q12.9 15.600000000000001 15.4 14.0V9.8Z" fill="url(#gCyl)"/><ellipse cx="12.9" cy="9.8" rx="2.5" ry="1.1" fill="#ffd84a" stroke="#e8a410" stroke-width=".5"/></svg>
<div class="t " style="left:448px;top:518px;letter-spacing:-0.075px;">Распределенная информационная база (РИБ)</div>
<div class="ar" style="left:794px;top:520px;"></div>
<div class="t " style="left:448px;top:541px;letter-spacing:-0.036px;">Прочие обмены данными</div>
<div class="ar" style="left:794px;top:543px;"></div>
<div class="sep" style="left:444px;top:560px;width:358px"></div>
<div class="t " style="left:448px;top:568px;letter-spacing:0.036px;">Обмен электронными документами</div>
<div class="ar" style="left:794px;top:570px;"></div>
<div class="sep" style="left:444px;top:587px;width:358px"></div>
<div class="t " style="left:448px;top:595px;letter-spacing:0.018px;">Интернет-поддержка пользователей</div>
<div class="ar" style="left:794px;top:597px;"></div>
<svg class="i-email" style="left:420px;top:616px" width="16" height="16" viewBox="0 0 16 16"><rect x="0.5" y="2.5" width="15" height="11" fill="#cdf9ff" stroke="#1b7fc0"/><path d="M0.5 13.5H15.5V2.5" fill="none" stroke="#0b629c"/><text x="8" y="11.2" font-family="Liberation Sans,sans-serif" font-size="9.5" fill="#1f7fc0" stroke="#1f7fc0" stroke-width=".35" text-anchor="middle">@</text></svg>
<div class="t " style="left:448px;top:618px;letter-spacing:-0.047px;">Электронная почта (встроенный клиент)</div>
<div class="sep" style="left:444px;top:637px;width:358px"></div>
<div class="hl" style="left:416px;top:641px;width:390px;height:21px"></div>
<div class="t " style="left:448px;top:645px;letter-spacing:0.001px;color:#1f2f6f">Торговое оборудование</div>
<div class="ar" style="left:794px;top:647px;background:#36448c"></div>
<div class="sep" style="left:444px;top:664px;width:358px"></div>
<div class="t " style="left:448px;top:672px;letter-spacing:-0.206px;">Служебные</div>
<div class="ar" style="left:794px;top:674px;"></div>
<div class="sep" style="left:444px;top:691px;width:358px"></div>
<div class="t " style="left:448px;top:699px;letter-spacing:0.023px;"><u>Н</u>астройка...</div>
<svg class="i-wrench" style="left:420px;top:720px" width="16" height="16" viewBox="0 0 16 16"><path d="M5 0.4C3 0.9 2.3 3.3 3.4 5.1L5.7 8V13.8C5.7 15.9 10.5 15.9 10.5 13.8V8L12.8 5.1C13.9 3.3 13.2 0.9 11.2 0.4L9.7 0.9V4C9.7 5 8.9 5.3 8.1 5.3C7.3 5.3 6.5 5 6.5 4V0.9Z" fill="url(#gWr)" stroke="#7e7e7e" stroke-width="1" stroke-linejoin="round"/><rect x="7.6" y="9.4" width="1" height="4.6" rx=".5" fill="#8a8a8a"/></svg>
<div class="t " style="left:448px;top:722px;letter-spacing:-0.009px;">Параметры...</div>
<div class="menu sub" style="left:8px;top:639px;width:408px;height:127px"><div class="strip"></div></div>
<div class="hl" style="left:10px;top:642px;width:404px;height:21px"></div>
<svg class="i-wizard" style="left:14px;top:644px" width="16" height="16" viewBox="0 0 16 16"><g transform="translate(0 1.4)"><path d="M4.4 0.6L0.2 13.2Q4.4 14.8 8.8 13.2Z" fill="url(#gHat)"/><circle cx="2.4" cy="7.6" r=".7" fill="#ffd020"/><circle cx="4.4" cy="9.6" r=".7" fill="#ffd020"/><circle cx="6.4" cy="10.4" r=".7" fill="#ffd020"/><circle cx="1.6" cy="11.6" r=".7" fill="#ffd020"/><circle cx="5.4" cy="12.6" r=".7" fill="#ffd020"/><path d="M10.4 7.6L14.8 12" stroke="#666a70" stroke-width="1"/><g transform="translate(8.6 5) scale(.86) translate(-8.6 -5.1)"><path d="M8.6 0.6L9.6 3L12.2 2L11 4.4L13 5.2L11 6L12 8.4L9.6 7.4L8.6 9.6L7.6 7.4L5.2 8.4L6.2 6L4.4 5.2L6.2 4.4L5.2 2L7.6 3Z" fill="#f8e400" stroke="#e8b800" stroke-width=".4"/><path d="M8.6 3.2L9.6 4.4L10.6 5.2L9.6 6L8.6 7.2L7.6 6L6.6 5.2L7.6 4.4Z" fill="#fff"/></g></g></svg>
<div class="t " style="left:42px;top:647px;letter-spacing:0.025px;color:#1f2f6f">Помощник подключения и настройки торгового оборудования</div>
<div class="t " style="left:42px;top:670px;letter-spacing:-0.002px;">Подключение и настройка торгового оборудования</div>
<div class="sep" style="left:38px;top:689px;width:372px"></div>
<div class="t " style="left:42px;top:697px;letter-spacing:0.076px;">Работа с ККМ</div>
<div class="ar" style="left:402px;top:699px;"></div>
<div class="t " style="left:42px;top:720px;letter-spacing:-0.053px;">Работа с терминалами сбора данных</div>
<div class="ar" style="left:402px;top:722px;"></div>
<div class="sep" style="left:38px;top:739px;width:372px"></div>
<div class="t " style="left:42px;top:747px;letter-spacing:0.093px;">Кассовая смена</div>
<div class="a" style="left:416px;top:641px;width:3px;height:99px;background:linear-gradient(to right,rgba(70,70,70,.55),rgba(90,90,80,.25) 40%,rgba(90,90,80,0))"></div>
<div class="a" style="left:2px;top:639px;width:803px;height:27px;box-sizing:border-box;border:2px solid #fb0007"></div>
</body></html>
